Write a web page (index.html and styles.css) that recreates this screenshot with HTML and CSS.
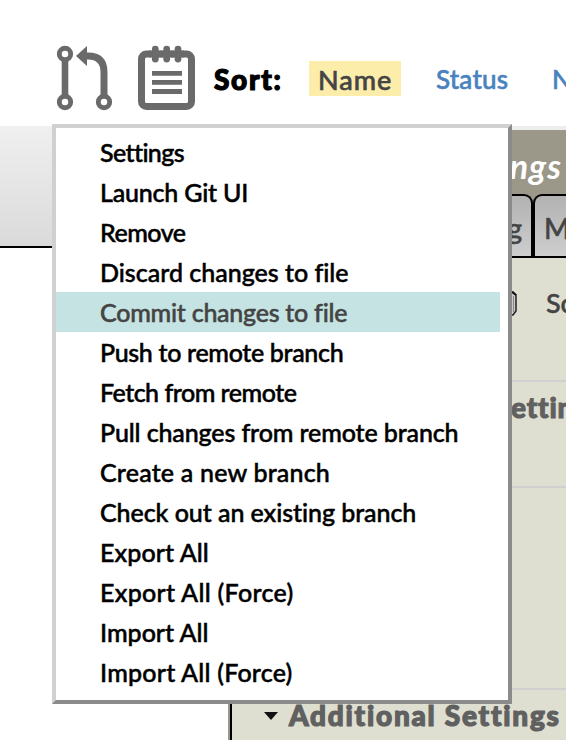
FILE: index.html
```html
<!DOCTYPE html>
<html lang="en">
<head>
<meta charset="utf-8">
<title>Sort</title>
<link rel="stylesheet" href="styles.css">
</head>
<body>
<header class="toolbar">
  <svg class="git" width="58" height="66" viewBox="0 0 58 66" fill="none" stroke="#6a6a6a">
    <path d="M10 14V50" stroke-width="6.6"/>
    <path d="M29 11H33Q49 11 49 27V50" stroke-width="7"/>
    <circle cx="10" cy="9" r="5.7" stroke-width="4.9"/>
    <circle cx="10" cy="57" r="5.7" stroke-width="4.9"/>
    <circle cx="49" cy="57" r="5.7" stroke-width="4.9"/>
    <path d="M21 11L32 1V21Z" fill="#6a6a6a" stroke="none"/>
  </svg>
  <svg class="notes" width="58" height="66" viewBox="0 0 58 66" fill="none" stroke="#6a6a6a">
    <rect x="3.5" y="9" width="50" height="52.5" rx="5" stroke-width="7"/>
    <path d="M17.3 4V14M28.7 4V14M40 4V14" stroke="#fff" stroke-width="8.5"/>
    <path d="M11 9H46" stroke-width="7"/>
    <path d="M17.3 4.2V14M28.7 4.2V14M40 4.2V14" stroke-width="6.8" stroke-linecap="round"/>
    <path d="M14 28.3H44M14 37.4H44M14 46.5H44" stroke-width="4.8"/>
  </svg>
  <b class="sort">Sort:</b>
  <span class="choice active">Name</span>
  <span class="choice status">Status</span>
  <span class="choice next">N</span>
</header>
<main class="content">
  <aside class="side"></aside>
  <section class="panel">
    <h1 class="title">ngs</h1>
    <nav class="tabs"><div class="tab first">g</div><div class="tab second">M</div></nav>
    <div class="row schedule"><svg width="8" height="30" viewBox="0 0 8 30"><path d="M0 3H1L4 6V22L1 26H0" fill="#ccc" stroke="#222" stroke-width="1.5"/><path d="M0 3L4 6" stroke="#111" stroke-width="2"/><path d="M1.5 7V23" stroke="#888" stroke-width="1"/></svg><span>Sc</span></div>
    <div class="row group">ettin</div>
    <div class="row blank"></div>
    <div class="row additional"><i class="arrow"></i><span>Additional Settings</span></div>
  </section>
</main>
<ul class="menu">
  <li><span class="m1">Settings</span></li>
  <li><span class="m2">Launch Git UI</span></li>
  <li><span class="m3">Remove</span></li>
  <li><span class="m4">Discard changes to file</span></li>
  <li class="hover"><span class="m5">Commit changes to file</span></li>
  <li><span class="m6">Push to remote branch</span></li>
  <li><span class="m7">Fetch from remote</span></li>
  <li><span class="m8">Pull changes from remote branch</span></li>
  <li><span class="m9">Create a new branch</span></li>
  <li><span class="m10">Check out an existing branch</span></li>
  <li><span class="m11">Export All</span></li>
  <li><span class="m12">Export All (Force)</span></li>
  <li><span class="m13">Import All</span></li>
  <li><span class="m14">Import All (Force)</span></li>
</ul>
</body>
</html>
```
FILE: styles.css
```css
* { box-sizing: border-box; }
body {
  margin: 0;
  width: 566px;
  height: 740px;
  overflow: hidden;
  background: #fff;
  color: #000;
  font-family: Futura, Lato, sans-serif;
  font-size: 25px;
  font-weight: 500;
  font-variant-ligatures: none;
}
.toolbar { display: flex; height: 126px; padding: 45px 0 0 55px; white-space: nowrap; overflow: hidden; }
.toolbar svg { flex: none; }
.notes { margin-left: 25px; }
.sort { flex: none; width: 113px; padding-left: 18px; font-size: 28px; font-weight: 900; line-height: 69px; letter-spacing: 1.7px; -webkit-text-stroke: 1.2px; }
.choice { flex: none; height: 35px; margin-top: 16px; line-height: 37px; font-size: 26px; color: #4a82bf; -webkit-text-stroke: 0.6px; }
.active { width: 92px; padding-left: 9px; background: #fcedaa; color: #444; font-size: 27px; letter-spacing: 1px; }
.status { width: 81px; margin-left: 35px; letter-spacing: 0.2px; }
.next { margin-left: 35px; }
.content { display: flex; height: 614px; }
.side { width: 228px; height: 122px; border-bottom: 2px solid #000; background: linear-gradient(#f0f0f0, #dadada); }
.panel { flex: 1; min-width: 0; border-top: 4px solid #eceeed; background: #dedfd0; box-shadow: inset 2px 0 #9b978b, inset 4px 0 #000; }
.title { height: 64px; margin: 0; padding-right: 4px; background: #9b988a; color: #fff; text-align: right; font-size: 34px; font-style: italic; font-weight: 700; line-height: 72px; letter-spacing: 1px; }
.tabs { display: flex; height: 64px; background: #9b988a; border-bottom: 2px solid #000; }
.tab { flex: none; height: 62px; border: 2px solid #000; border-bottom: 0; border-radius: 9px 9px 0 0; background: linear-gradient(#b2b2b2, #cecece); color: #444; font-size: 28px; line-height: 64px; -webkit-text-stroke: 0.5px; }
.first { width: 305px; padding-right: 9px; text-align: right; }
.second { width: 100px; padding-left: 9px; }
.tabs, .row { overflow: hidden; }
.row { margin-left: 4px; border-bottom: 2px solid #d0d0d0; white-space: nowrap; }
.schedule { display: flex; height: 124px; padding: 31px 0 0 280px; color: #444; line-height: 28px; -webkit-text-stroke: 0.5px; }
.schedule svg { flex: none; }
.schedule span { margin-left: 26px; font-size: 27px; }
.group { height: 106px; padding-left: 279px; color: #606060; font-size: 28px; font-weight: 900; line-height: 50px; letter-spacing: 0.8px; -webkit-text-stroke: 1px; }
.blank { height: 202px; }
.additional { display: flex; height: 52px; border: 0; padding-left: 32px; color: #606060; font-size: 28px; font-weight: 900; line-height: 50px; letter-spacing: 1.75px; -webkit-text-stroke: 1.2px; }
.arrow { flex: none; width: 14px; height: 8px; margin: 22px 11px 0 0; background: #111; clip-path: polygon(0 0, 100% 0, 50% 100%); }
.menu { position: absolute; left: 52px; top: 124px; width: 460px; height: 580px; margin: 0; padding: 4px 8px 0 0; border: 4px solid; border-color: #d0d0d0 #8b8b8b #8b8b8b #d0d0d0; background: #fff; list-style: none; }
.menu li { height: 40px; padding-left: 44px; line-height: 40px; white-space: nowrap; -webkit-text-stroke: 0.5px; }
.menu .hover { background: #c5e3e2; color: #444; }
.m1 { letter-spacing: -0.6px; }
.m2 { letter-spacing: -0.2px; }
.m3 { letter-spacing: -0.5px; }
.m5 { letter-spacing: -0.25px; }
.m6 { letter-spacing: -0.33px; }
.m7 { letter-spacing: -0.5px; }
.m8 { letter-spacing: -0.12px; }
.m9 { letter-spacing: 0.2px; }
.m10 { letter-spacing: -0.06px; }
.m11 { letter-spacing: 0.1px; }
.m12 { letter-spacing: 0.3px; }
.m14 { letter-spacing: 0.22px; }
```
